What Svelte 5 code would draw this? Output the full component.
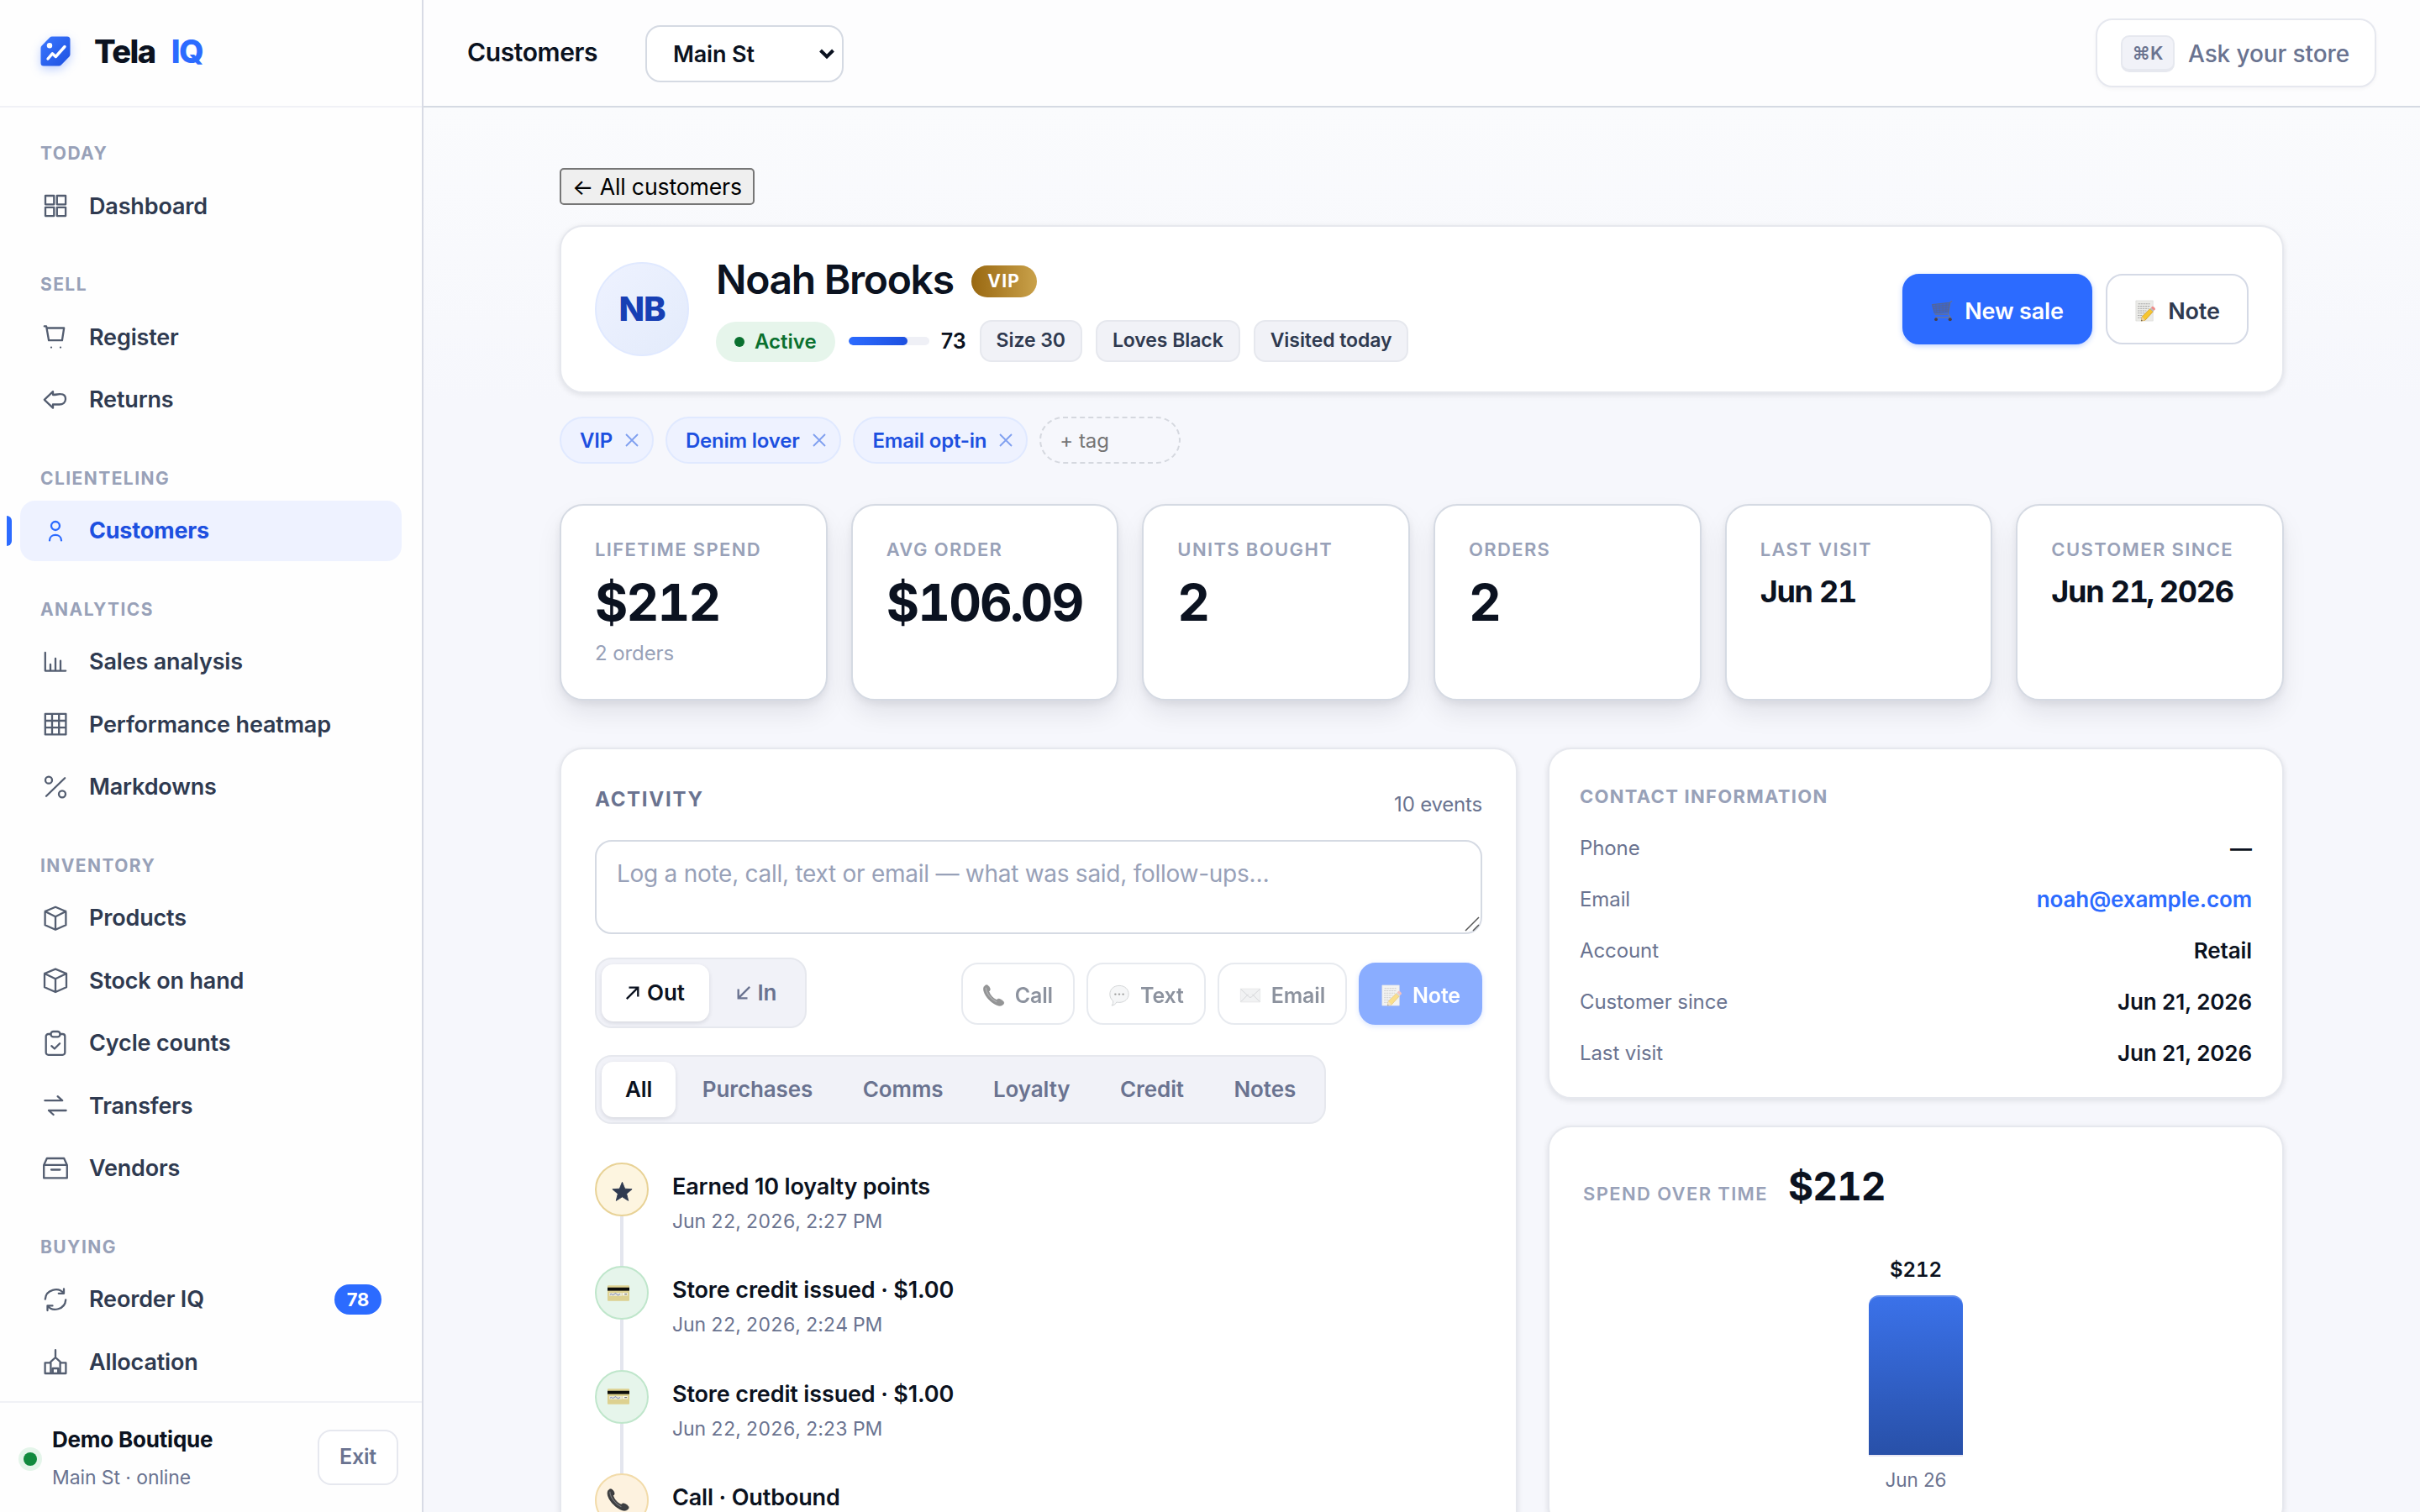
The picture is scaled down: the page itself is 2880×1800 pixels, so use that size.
<script>
  const nav = [
    { title: 'TODAY', items: [{ label: 'Dashboard', icon: 'grid4' }] },
    { title: 'SELL', items: [{ label: 'Register', icon: 'cart' }, { label: 'Returns', icon: 'back' }] },
    { title: 'CLIENTELING', items: [{ label: 'Customers', icon: 'user', active: true }] },
    {
      title: 'ANALYTICS',
      items: [
        { label: 'Sales analysis', icon: 'bars' },
        { label: 'Performance heatmap', icon: 'grid9' },
        { label: 'Markdowns', icon: 'percent' }
      ]
    },
    {
      title: 'INVENTORY',
      items: [
        { label: 'Products', icon: 'box' },
        { label: 'Stock on hand', icon: 'boxWide' },
        { label: 'Cycle counts', icon: 'clipboard' },
        { label: 'Transfers', icon: 'transfer' },
        { label: 'Vendors', icon: 'drawer' }
      ]
    },
    {
      title: 'BUYING',
      items: [
        { label: 'Reorder IQ', icon: 'refresh', badge: '78' },
        { label: 'Allocation', icon: 'building' }
      ]
    }
  ];

  const icons = {
    grid4: 'M6 6h10.3v10.3H6zM19.8 6h10.3v10.3H19.8zM6 19.8h10.3v10.3H6zM19.8 19.8h10.3v10.3H19.8z',
    cart: 'M4.8 5.4h2.3l3 16.8h15.8l2.3-14.7H7.5M13 30.6h.02M24 30.6h.02',
    back: 'M15 8.2 4.8 17.8 15 27.6v-4.1h7.6c4.2 0 7.4-2.4 7.4-6.5s-2.6-5.8-6-5.8c-2.600-.2-4.600.8-9 .8z',
    user: 'M23 12a5 5 0 1 1-10 0 5 5 0 0 1 10 0zM11 29.400c0-8.600 14-8.600 14 0',
    bars: 'M5.800 7v21.600h24.400M12 28v-7M18 28V14M24 28V16.600',
    grid9: 'M5.800 5.800h24.600v24.600H5.800zM5.800 14h24.600M5.800 22.200h24.600M14 5.800v24.600M22.200 5.800v24.600',
    percent: 'M7 28.800 29.200 7.200M14 9.700a4 4 0 1 1-8 0 4 4 0 0 1 8 0zM30 26.300a4 4 0 1 1-8 0 4 4 0 0 1 8 0z',
    box: 'M18 4.800 30.400 10v16.200L18 31.800 5.600 26.200V10zM5.600 10 18 16.200 30.400 10M18 16.200v15.600',
    boxWide: 'M18 4.600 31 10v16.200L18 32 5 26.200V10zM5 10l13 6.200L31 10M18 16.200V32',
    clipboard: 'M12.800 7H9.500a2.800 2.800 0 0 0-2.800 2.800V29a2.800 2.800 0 0 0 2.800 2.800h17a2.800 2.800 0 0 0 2.800-2.800V9.800A2.800 2.800 0 0 0 26.500 7h-3.300M15.600 4h4.800a3 3 0 0 1 0 6.400h-4.800a3 3 0 0 1 0-6.400zM13.300 21.200l3.600 3.300 6.200-6.300',
    transfer: 'M5.400 12.200h20.800l-5.600-5M30.600 24H10l5.600 5',
    drawer: 'M7.800 6h20.400l3.600 8v15.400H4.200V14zM4.200 13.800h27.600M13 19.500h10.400',
    refresh: 'M5.800 17.600C6.500 6.200 21.500 2.400 28 10.800M28 5.400v5.400h-6.200M30.200 18.400C29.500 29.800 14.500 33.600 8.500 25.400M8.500 31v-5.600h6',
    building: 'M18 4.200v9M18 13l-5.600 5.200M18 13l5.600 5.200M5.600 19.400h6.800V32H5.600zM23.600 19.400h6.800V32h-6.800zM12.400 32h11.200M14.800 32v-6h6.400v6'
  };

  const facts = ['Size 30', 'Loves Black', 'Visited today'];
  const tags = ['VIP', 'Denim lover', 'Email opt-in'];
  const kpis = [
    { label: 'LIFETIME SPEND', value: '$212', note: '2 orders' },
    { label: 'AVG ORDER', value: '$106.09' },
    { label: 'UNITS BOUGHT', value: '2' },
    { label: 'ORDERS', value: '2' },
    { label: 'LAST VISIT', value: 'Jun 21', small: true },
    { label: 'CUSTOMER SINCE', value: 'Jun 21, 2026', small: true }
  ];
  const logButtons = [
    { label: 'Call', icon: 'phone' },
    { label: 'Text', icon: 'bubble' },
    { label: 'Email', icon: 'mail' },
    { label: 'Note', icon: 'memo', primary: true }
  ];
  const filters = ['All', 'Purchases', 'Comms', 'Loyalty', 'Credit', 'Notes'];
  const events = [
    { title: 'Earned 10 loyalty points', when: 'Jun 22, 2026, 2:27 PM', icon: 'star', tone: 'gold' },
    { title: 'Store credit issued · $1.00', when: 'Jun 22, 2026, 2:24 PM', icon: 'card', tone: 'green' },
    { title: 'Store credit issued · $1.00', when: 'Jun 22, 2026, 2:23 PM', icon: 'card', tone: 'green' },
    { title: 'Call · Outbound', icon: 'phone', tone: 'amber' }
  ];
  const contact = [
    { k: 'Phone', v: '—' },
    { k: 'Email', v: 'noah@example.com', link: true },
    { k: 'Account', v: 'Retail' },
    { k: 'Customer since', v: 'Jun 21, 2026' },
    { k: 'Last visit', v: 'Jun 21, 2026' }
  ];
  const score = 73;

  // Splits a figure so its punctuation can be set tighter than the digits.
  const pieces = (value) => value.split(/([.,])/);
</script>

{#snippet emoji(name)}
  <svg class="emoji" viewBox="0 0 28 28" aria-hidden="true">
    {#if name === 'cart'}
      <path d="M27 1.500 24.500 3 22 18.500H5" fill="none" stroke="#6a7086" stroke-width="1.300" />
      <path d="M1.500 6 24 3.500 22 15.500 4.500 17z" fill="#3f66c8" stroke="#5a668a" stroke-width="1" />
      <path d="M2 8.500 23.500 6.500M2.800 11.300 23 9.500M3.600 14 22.500 12.700M6 5.500l1.500 11M10.500 5l1 11.500M15 4.500l.4 11.700M19.500 4l-.3 11.800" stroke="#586590" stroke-width=".7" fill="none" />
      <path d="M22 18 25 22.500H6" fill="none" stroke="#74798c" stroke-width="1.300" />
      <circle cx="6.500" cy="25" r="2" fill="#4b4144" /><circle cx="24.500" cy="25" r="2.200" fill="#4b4144" />
    {:else if name === 'memo'}
      <path d="M2 1h22v26H2z" fill="#ebebe8" stroke="#d5d5d2" stroke-width=".6" />
      <path d="M5 5h15M4.500 8h15.500M4.500 11h14M4.500 14h11M4.500 17h9M4.500 20h6M4.500 23h5" stroke="#a6a6a6" stroke-width="1.100" stroke-dasharray="2.400 .8" />
      <path d="M20 11.500 24 15 14 26l-5 1 1-5.500z" fill="#f7c62f" stroke="#c58c17" stroke-width=".7" />
      <path d="m10 21.500 4 4.500-5 1z" fill="#ecd0a0" /><path d="m9.300 25.500 1.300 1.200-1.800.5z" fill="#333" />
      <path d="m20 11.500 1.300-1.400 4 3.500L24 15z" fill="#b5bcc2" />
      <path d="m21.300 10.100 1.400-1.500c1-1 5 2.400 4 3.500l-1.400 1.500z" fill="#ee8e8b" />
    {:else if name === 'phone'}
      <path d="M2.500 1.500c2.500-1.800 5 .5 6 3.200.8 2.200 0 3.300-1.200 4.300 1.300 4.500 5.500 9 10 11 1.200-1.200 2.300-2 4.500-1 2.800 1.200 6 3.500 4.200 6-2 2.800-6 2.500-9.500.8C8.500 22 2 14 .8 7.500.4 5 .8 2.700 2.500 1.500z" fill="#3d3f42" stroke="#232426" stroke-width=".8" />
      <path d="M3.500 4c0 6 5.500 14.500 14 18.500" fill="none" stroke="#77797c" stroke-width="1.200" />
    {:else if name === 'bubble'}
      <path d="M14 1.500c7 0 12 4.600 12 10.800S21 23 14 23c-1.200 0-2.300-.1-3.300-.4C9.500 25 7 26.800 4.300 27c1.500-1.600 2-3.600 1.600-6C3.300 19 2 15.800 2 12.300 2 6.100 7 1.500 14 1.500z" fill="#eef0f1" stroke="#a9adb1" stroke-width="1" />
      <circle cx="9" cy="12.500" r="1.300" fill="#555" /><circle cx="14" cy="12.500" r="1.300" fill="#555" /><circle cx="19" cy="12.500" r="1.300" fill="#555" />
    {:else if name === 'mail'}
      <path d="M1.500 5.500h25v17h-25z" fill="#e7e8ea" stroke="#cfd1d3" stroke-width=".8" />
      <path d="m2 22 9.500-9.500M26 22l-9.500-9.500M1.800 6l10.700 10q1.500 1.200 3 0L26.200 6" fill="none" stroke="#aeb1b5" stroke-width="1" />
    {:else if name === 'card'}
      <path d="M1.500 4.500h25q1 0 1 1v17q0 1-1 1h-25q-1 0-1-1v-17q0-1 1-1z" fill="#ddd190" />
      <path d="M.5 7h27v4H.5z" fill="#0d0d0b" />
      <path d="M2.500 13.500h16v4h-16z" fill="#e9e6d0" /><path d="M19 13.500h6.500v3.500H19z" fill="#f4f2e4" />
      <path d="M3.500 16q1.500-2 2.500-.5t3-.5 3 .5 4-.5" fill="none" stroke="#6f7fc0" stroke-width="1" />
      <path d="M21.500 15.200h3" stroke="#555" stroke-width="1" />
    {:else if name === 'star'}
      <path d="m14 1.500 3.600 8.800 9.400.6-7.200 6.100 2.300 9.200L14 21.100l-8.100 5.100 2.300-9.200L1 10.900l9.400-.6z" fill="#2f3a50" stroke="#2f3a50" stroke-linejoin="round" />
    {/if}
  </svg>
{/snippet}

<div class="app">
  <aside>
    <div class="brand">
      <svg class="logo" viewBox="0 0 36 36" aria-hidden="true">
        <defs>
          <linearGradient id="brandFill" x1="0" y1="0" x2="1" y2="1">
            <stop offset="0" stop-color="#3b78ff" /><stop offset="1" stop-color="#1d50e0" />
          </linearGradient>
        </defs>
        <path d="M14 .5H32a3.500 3.500 0 0 1 3.500 3.500v17.800a4 4 0 0 1-1.100 2.800l-9.500 9.700a4 4 0 0 1-2.900 1.200H4A3.500 3.500 0 0 1 .5 32V14.200a4 4 0 0 1 1.100-2.800l9.500-9.700A4 4 0 0 1 14 .5z" fill="url(#brandFill)" />
        <circle cx="11" cy="11.300" r="3.200" fill="#fff" />
        <path d="m9 27 5.300-6.200 4 3.700L29 12.500" fill="none" stroke="#fff" stroke-width="3.400" stroke-linecap="round" stroke-linejoin="round" />
      </svg>
      <span class="brand-name">Tela</span><span class="brand-iq">IQ</span>
    </div>
    <nav>
      {#each nav as group}
        <section>
          <h6>{group.title}</h6>
          {#each group.items as item}
            <a class="item" class:active={item.active}>
              <svg class="ico" viewBox="0 0 36 36" aria-hidden="true"><path d={icons[item.icon]} /></svg>
              <span>{item.label}</span>
              {#if item.badge}<b class="badge">{item.badge}</b>{/if}
            </a>
          {/each}
        </section>
      {/each}
    </nav>
    <footer>
      <i class="online"></i>
      <div class="store">
        <strong>Demo Boutique</strong>
        <span>Main St · online</span>
      </div>
      <button class="exit">Exit</button>
    </footer>
  </aside>

  <main>
    <header>
      <h1>Customers</h1>
      <button class="select">
        Main St
        <svg viewBox="0 0 20 14" aria-hidden="true"><path d="m2.500 3 7.500 7.500L17.500 3" /></svg>
      </button>
      <button class="ask"><kbd>⌘K</kbd><span>Ask your store</span></button>
    </header>

    <div class="content">
      <button class="back">← All customers</button>

      <div class="card hero">
        <div class="avatar">NB</div>
        <div class="who">
          <div class="name"><h2>Noah Brooks</h2><span class="vip">VIP</span></div>
          <div class="meta">
            <span class="status"><i></i>Active</span>
            <span class="score"><span class="track"><span class="fill" style="width:{score}%"></span></span>{score}</span>
            {#each facts as f}<span class="fact">{f}</span>{/each}
          </div>
        </div>
        <div class="hero-actions">
          <button class="btn primary">{@render emoji('cart')}New sale</button>
          <button class="btn">{@render emoji('memo')}Note</button>
        </div>
      </div>

      <div class="tags">
        {#each tags as t}
          <span class="tag">{t}<svg viewBox="0 0 16 16" aria-hidden="true"><path d="m1 1 14 14M15 1 1 15" /></svg></span>
        {/each}
        <span class="tag add">+ tag</span>
      </div>

      <div class="kpis">
        {#each kpis as k}
          <div class="kpi">
            <div class="label">{k.label}</div>
            <div class="value" class:small={k.small}>{#each pieces(k.value) as p}{#if p === '.' || p === ','}<span class="punct">{p}</span>{:else}{p}{/if}{/each}</div>
            {#if k.note}<div class="note">{k.note}</div>{/if}
          </div>
        {/each}
      </div>

      <div class="columns">
        <div class="card activity">
          <div class="head"><h3>ACTIVITY</h3><span>10 events</span></div>
          <div class="textarea">
            Log a note, call, text or email — what was said, follow-ups…
            <svg class="grip" viewBox="0 0 18 18" aria-hidden="true"><path d="M1 17 17 1M10 17l7-7" /></svg>
          </div>
          <div class="log-row">
            <div class="seg direction">
              <span class="on"><svg viewBox="0 0 20 20" aria-hidden="true"><path d="M2 18 17 3M5 3h12v12" /></svg>Out</span>
              <span><svg viewBox="0 0 20 20" aria-hidden="true"><path d="M18 2 3 17M15 17H3V5" /></svg>In</span>
            </div>
            <div class="log-buttons">
              {#each logButtons as b}
                <button class="mini" class:primary={b.primary}>{@render emoji(b.icon)}{b.label}</button>
              {/each}
            </div>
          </div>
          <div class="seg filters">
            {#each filters as f, i}<span class:on={i === 0}>{f}</span>{/each}
          </div>
          <div class="timeline">
            {#each events as e}
              <div class="event">
                <div class="dot {e.tone} {e.icon}">{@render emoji(e.icon)}</div>
                <div class="event-text"><strong>{e.title}</strong>{#if e.when}<span>{e.when}</span>{/if}</div>
              </div>
            {/each}
          </div>
        </div>

        <div class="side">
          <div class="card contact">
            <h4>CONTACT INFORMATION</h4>
            {#each contact as c}
              <div class="row"><span>{c.k}</span><b class:link={c.link}>{c.v}</b></div>
            {/each}
          </div>
          <div class="card spend">
            <div class="spend-head"><h4>SPEND OVER TIME</h4><strong>$212</strong></div>
            <div class="chart">
              <span class="bar-value">$212</span>
              <div class="bar"></div>
              <span class="bar-label">Jun 26</span>
            </div>
          </div>
        </div>
      </div>
    </div>
  </main>
</div>

<style>
  :global(body) { margin: 0; overflow: hidden; }
  .app, .app * { box-sizing: border-box; }
  .app {
    display: flex; width: 2880px; height: 1800px; overflow: hidden;
    font-family: Inter, 'Liberation Sans', sans-serif; color: #0b1220; background: #f6f7fc;
    -webkit-font-smoothing: antialiased;
  }
  h1, h2, h3, h4, h6 { margin: 0; white-space: nowrap; }
  button { font-family: inherit; margin: 0; letter-spacing: -0.006em; }
  span, b, strong { white-space: nowrap; }

  aside { display: flex; flex-direction: column; width: 504px; flex: none; background: #fefefe; border-right: 2px solid #d8dbe5; }
  .brand { display: flex; align-items: center; flex: none; height: 128px; padding: 0 0 4px 48px; border-bottom: 2px solid #f0f1f6; font-size: 38px; font-weight: 800; letter-spacing: -0.04em; }
  .logo { width: 36px; height: 36px; margin-right: 28px; overflow: visible; filter: drop-shadow(0 4px 6px rgba(45, 107, 255, .3)); }
  .brand-name, .brand-iq { padding-bottom: 1px; }
  .brand-iq { margin-left: 19px; color: #2c6bff; }
  nav { flex: 1; min-height: 0; padding: 30px 24px 0; overflow: hidden; }
  section { display: flex; flex-direction: column; gap: 3px; padding-bottom: 33px; }
  h6 { height: 48.500px; padding-left: 24px; line-height: 50px; font-size: 21px; font-weight: 700; letter-spacing: .068em; color: #98a1b8; }
  .item { display: flex; align-items: center; flex: none; height: 71.500px; padding: 0 24px; border-radius: 18px; font-size: 27px; font-weight: 600; letter-spacing: -0.006em; color: #2f3a50; position: relative; }
  .item.active { background: #eef2ff; color: #1d50e0; font-weight: 700; letter-spacing: -0.008em; }
  .item.active::before { content: ''; position: absolute; left: -16px; top: 18px; width: 6px; height: 36px; border-radius: 0 6px 6px 0; background: #2c6bff; }
  .ico { width: 36px; height: 36px; margin-right: 22px; fill: none; stroke: #535d70; stroke-width: 2.300; stroke-linecap: round; stroke-linejoin: round; }
  .active .ico { stroke: #2c6bff; }
  .badge { margin-left: auto; width: 56px; height: 36px; border-radius: 18px; background: #2c6bff; color: #fff; font-size: 22px; line-height: 36px; text-align: center; font-weight: 700; }
  footer { display: flex; align-items: center; flex: none; height: 132px; padding: 4px 28px 0; border-top: 2px solid #f0f1f6; }
  .online { width: 16px; height: 16px; border-radius: 50%; background: #118a3e; box-shadow: 0 0 0 6px #e4f5ea; }
  .store { display: flex; flex-direction: column; gap: 7px; margin: -2px 0 0 18px; letter-spacing: -0.006em; }
  .store strong { font-size: 26px; line-height: 38px; font-weight: 700; letter-spacing: -0.008em; }
  .store span { font-size: 23px; line-height: 38px; color: #6a7390; }
  .exit { margin: -5px 0 0 auto; width: 96px; height: 66px; border: 2px solid #e6e8ef; border-radius: 16px; background: #fff; color: #6a7390; font-size: 25px; font-weight: 600; padding: 0 0 2px; }

  main { display: flex; flex-direction: column; flex: 1; min-width: 0; background: linear-gradient(#fafbfd 128px, #f6f7fc 480px); }
  header { display: flex; align-items: center; flex: none; height: 128px; padding: 0 52px; background: #fdfdfe; border-bottom: 2px solid #d5dae3; }
  h1 { width: 160px; padding-bottom: 3px; font-size: 30px; font-weight: 600; letter-spacing: -0.013em; }
  .select { display: flex; align-items: center; justify-content: space-between; width: 236px; height: 68px; margin: 2px 0 0 52px; padding: 0 8px 0 31px; border: 2px solid #d5dae3; border-radius: 18px; background: #fff; color: #0b1220; font-size: 27px; font-weight: 600; }
  .select svg { width: 20px; height: 14px; fill: none; stroke: #0b1220; stroke-width: 4; }
  .ask { display: flex; align-items: center; width: 334px; height: 82px; margin-left: auto; padding: 1px 28px 0; border: 2px solid #e6e8ef; border-radius: 20px; background: #fff; color: #6a7390; font-size: 28px; font-weight: 550; letter-spacing: -0.004em; box-shadow: 0 2px 4px rgba(15, 23, 42, .04); }
  kbd { width: 64px; height: 44px; margin-right: 16px; border: 2px solid #e6e8ef; border-bottom-width: 4px; border-radius: 10px; background: #f1f2f8; font: 600 22px/38px Inter, sans-serif; text-align: center; }

  .content { display: flex; flex-direction: column; width: 2052px; margin: 0 auto; padding-top: 72px; letter-spacing: -0.006em; }
  .back { align-self: flex-start; width: 232px; height: 44px; padding: 0; border: 2px solid #767676; border-radius: 5px; background: #efefef; color: #000; font-size: 26.670px; white-space: nowrap; }
  .card { background: #fff; border: 2px solid #e6e8ee; border-radius: 28px; box-shadow: 0 2px 6px rgba(15, 23, 42, .08), 0 2px 12px rgba(15, 23, 42, .03); }
  .hero { display: flex; align-items: center; height: 200px; margin-top: 24px; padding: 0 40px; }
  .avatar { display: grid; place-items: center; width: 112px; height: 112px; padding-bottom: 1px; border: 2px solid #e0e9ff; border-radius: 50%; background: linear-gradient(135deg, #eef2ff, #e3ebfb); color: #173fb4; font-size: 40px; font-weight: 800; letter-spacing: -0.03em; }
  .who { margin-left: 32px; }
  .name { display: flex; align-items: center; height: 60px; }
  h2 { padding-bottom: 6px; font-size: 48px; font-weight: 600; letter-spacing: -0.027em; }
  .vip { width: 78px; height: 38px; margin: -1px 0 0 21px; border-radius: 19px; background: linear-gradient(90deg, #996811, #c9a14a); color: #fff; font-size: 21px; line-height: 38px; font-weight: 700; letter-spacing: .06em; text-align: center; }
  .meta { display: flex; align-items: center; height: 50px; margin-top: 15px; gap: 16px; }
  .status { display: flex; align-items: center; height: 48px; margin-top: 2px; padding: 0 22px; border-radius: 24px; background: #e6f5eb; color: #0a702f; font-size: 24px; font-weight: 600; letter-spacing: 0; }
  .status i { width: 12px; height: 12px; margin-right: 12px; border-radius: 50%; background: #0a702f; }
  .score { display: flex; align-items: center; gap: 14px; font-size: 25px; font-weight: 600; letter-spacing: 0; }
  .track { width: 96px; height: 10px; border-radius: 5px; background: #eff0f6; overflow: hidden; }
  .fill { display: block; height: 10px; border-radius: 5px; background: linear-gradient(90deg, #2c6bff, #1d50e0); }
  .fact { height: 50px; padding: 0 18px; border: 2px solid #e6e8ee; border-radius: 14px; background: #f1f2f7; color: #2f3a50; font-size: 23px; line-height: 44px; font-weight: 600; letter-spacing: -0.003em; }
  .hero-actions { display: flex; gap: 16px; margin-left: auto; }
  .btn { display: flex; align-items: center; justify-content: center; width: 170px; height: 84px; padding: 4px 0 0; border: 2px solid #d5dae6; border-radius: 20px; background: #fff; color: #2f3a50; font-size: 27px; font-weight: 600; }
  .btn.primary { width: 226px; border-color: #2c6bff; background: #2c6bff; color: #fff; box-shadow: 0 2px 6px rgba(44, 107, 255, .3); }
  .emoji { display: block; width: 26px; height: 28px; margin-right: 14px; }

  .tags { display: flex; gap: 14px; height: 56px; margin-top: 28px; }
  .tag { display: flex; align-items: center; padding: 0 16px 0 22px; border: 2px solid #e0e9ff; border-radius: 28px; background: #eef2ff; color: #1d50e0; font-size: 24px; font-weight: 600; letter-spacing: -0.009em; }
  .tag svg { width: 16px; height: 16px; margin-left: 15px; stroke: #7f9ff0; stroke-width: 1.800; }
  .tag.add { width: 168px; border: 2px dashed #d5d8df; background: none; color: #757575; font-weight: 400; letter-spacing: 0; }

  .kpis { display: grid; grid-template-columns: repeat(6, 1fr); gap: 28px; margin-top: 48px; }
  .kpi { height: 234px; padding: 36px 0 0 40px; border: 2px solid #d5dae3; border-radius: 28px; background: #fff; box-shadow: 0 4px 8px rgba(15, 23, 42, .06), 0 16px 32px -4px rgba(15, 23, 42, .1); white-space: nowrap; }
  .label, h4 { font-size: 22px; line-height: 32px; font-weight: 600; letter-spacing: .062em; color: #98a1b8; }
  .value { margin-top: 17px; font-size: 60px; line-height: 60px; font-weight: 700; letter-spacing: -0.03em; font-variant-numeric: tabular-nums; }
  .value.small { font-size: 36px; line-height: 34px; font-weight: 650; letter-spacing: -0.036em; }
  .punct { margin-left: -0.02em; letter-spacing: -0.06em; }
  .small .punct { margin-left: -0.03em; letter-spacing: -0.08em; }
  .note { margin-top: 15px; font-size: 24px; line-height: 32px; color: #98a1b8; }

  .columns { display: grid; grid-template-columns: 1140px 1fr; gap: 36px; align-items: start; margin-top: 56px; }
  .activity { height: 1000px; padding: 43px 40px 0; }
  .head { display: flex; justify-content: space-between; height: 65px; color: #6a7390; }
  h3 { padding-top: 1px; font-size: 24px; line-height: 32px; font-weight: 700; letter-spacing: .072em; }
  .head span { margin-top: 7px; font-size: 24px; line-height: 32px; letter-spacing: -0.008em; }
  .textarea { position: relative; height: 112px; padding: 17px 24px; border: 2px solid #d5dae3; border-radius: 20px; background: #fff; color: #98a1b8; font-size: 28px; line-height: 42px; letter-spacing: -0.0095em; }
  .grip { position: absolute; right: 1px; bottom: 1px; width: 18px; height: 18px; fill: none; stroke: #555; stroke-width: 1.500; }
  .log-row { display: flex; justify-content: space-between; height: 84px; margin-top: 28px; }
  .seg { display: flex; gap: 3.500px; padding: 6px; border: 2px solid #e6e8ee; border-radius: 20px; background: #f1f2f8; color: #6a7390; font-size: 26px; font-weight: 600; }
  .seg span { display: flex; align-items: center; padding-bottom: 1px; border-radius: 14px; }
  .seg .on { background: #fff; color: #0b1220; box-shadow: 0 2px 5px rgba(15, 23, 42, .12); }
  .direction { width: 252px; }
  .direction span { flex: none; height: 68px; width: 128px; padding-left: 28px; }
  .direction span:last-child { width: 104px; }
  .direction svg { width: 18px; height: 18px; margin-right: 8px; fill: none; stroke: currentColor; stroke-width: 2.600; }
  .log-buttons { display: flex; gap: 14px; padding-top: 6px; }
  .mini { display: flex; align-items: center; height: 74px; padding: 4px 24px 0; border: 2px solid #d5dae3; border-radius: 20px; background: #fff; color: #2f3a50; font-size: 25px; font-weight: 600; opacity: .55; }
  .mini .emoji { width: 26px; height: 26px; margin-right: 12px; }
  .mini.primary { border-color: #2c6bff; background: #2c6bff; color: #fff; box-shadow: 0 2px 6px rgba(44, 107, 255, .3); }
  .filters { width: 870px; height: 82px; margin-top: 32px; }
  .filters span { padding: 0 28px 1px; }
  .timeline { display: flex; flex-direction: column; margin-top: 46px; }
  .event { display: flex; height: 123.330px; gap: 28px; }
  .dot { display: grid; place-items: center; position: relative; flex: none; width: 64px; height: 64px; border: 2px solid; border-radius: 50%; }
  .dot .emoji { width: 28px; height: 27px; margin: 0 8px 0 0; }
  .dot.star .emoji { width: 25px; height: 25px; margin: 4px 0 0; }
  .dot.card { box-shadow: none; }
  .dot::after { content: ''; position: absolute; left: 28px; top: 62px; width: 4px; height: 60px; background: #e4e6ee; }
  .dot.gold { background: #fdf5e0; border-color: #e8d296; }
  .dot.green { background: #e6f5eb; border-color: #bfe6cb; }
  .dot.amber { background: #fdf2df; border-color: #f2dba9; }
  .event-text { display: flex; flex-direction: column; padding-top: 9px; letter-spacing: -0.009em; }
  .event-text strong { font-size: 27px; line-height: 40px; font-weight: 600; }
  .event-text span { margin-top: 3px; font-size: 23px; line-height: 36px; color: #6a7390; font-variant-numeric: tabular-nums; }

  .side { display: flex; flex-direction: column; gap: 32px; }
  .contact { height: 418px; padding: 40px 36px 0; }
  .contact h4 { margin-bottom: 15px; font-weight: 700; letter-spacing: .058em; }
  .row { display: flex; align-items: center; justify-content: space-between; height: 61px; font-size: 24px; color: #6a7390; }
  .row b { font-size: 26px; font-weight: 600; color: #0b1220; }
  .row .link { color: #2c6bff; }
  .spend { height: 481px; padding: 40px 40px 0; }
  .spend-head { display: flex; align-items: baseline; gap: 24px; height: 64px; }
  .spend-head strong { font-size: 46px; line-height: 60px; font-weight: 700; letter-spacing: -0.02em; font-variant-numeric: tabular-nums; }
  .chart { display: flex; flex-direction: column; align-items: center; padding-top: 48px; }
  .bar-value { font-size: 24px; line-height: 36px; font-weight: 600; font-variant-numeric: tabular-nums; }
  .bar { width: 112px; height: 192px; margin-top: 12px; border-radius: 12px 12px 0 0; background: linear-gradient(#3b72ea, #2850a8); border-bottom: 2px solid #e8e6f3; box-shadow: inset 0 2px 0 rgba(255, 255, 255, .2); }
  .bar-label { margin-top: 10px; font-size: 22.500px; line-height: 36px; color: #6a7390; }
</style>
